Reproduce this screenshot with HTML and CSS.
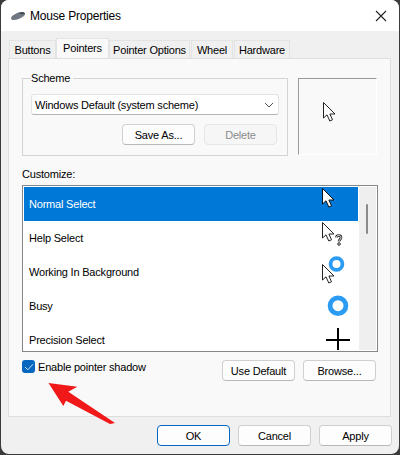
FILE: index.html
```html
<!DOCTYPE html>
<html lang="en">
<head>
  <meta charset="UTF-8" />
  <title>Mouse Properties</title>
  <link rel="stylesheet" href="styles.css">
</head>
<body>
  <div class="window">
    <div class="titlebar">
      <svg class="mouse-icon" width="16" height="10" viewBox="0 0 16 10">
        <path d="M1 7 C1 5 7 1.500 11 1 C14 .6 15.500 2 15 3.500 C14.500 5.500 8 9 4 9 C2 9 1 8.500 1 7Z" fill="#6f7880"/>
        <path d="M9 2 C11 1 14 .8 15 2.500 C13 3.500 11 3.500 9 2Z" fill="#3f464d"/>
      </svg>
      <span class="title">Mouse Properties</span>
      <svg class="close" width="12" height="12" viewBox="0 0 12 12">
        <path d="M1 1 L11 11 M11 1 L1 11" stroke="#222" stroke-width="1.100" fill="none"/>
      </svg>
    </div>

    <div class="content">
      <div class="tabs">
        <div class="tab tab-buttons">Buttons</div>
        <div class="tab active">Pointers</div>
        <div class="tab tab-options">Pointer Options</div>
        <div class="tab tab-wheel">Wheel</div>
        <div class="tab tab-hardware">Hardware</div>
      </div>

      <div class="page">
        <div class="scheme-row">
          <fieldset class="scheme">
            <legend>Scheme</legend>
            <div class="select">
              <span>Windows Default (system scheme)</span>
              <svg width="10" height="6" viewBox="0 0 10 6"><path d="M1 1 L5 5 L9 1" stroke="#555" fill="none"/></svg>
            </div>
            <div class="scheme-buttons">
              <button class="btn">Save As...</button>
              <button class="btn disabled">Delete</button>
            </div>
          </fieldset>
          <div class="preview">
            <svg width="13" height="20" viewBox="0 0 13 20"><path d="M.5 .5 V16 L4 12.800 L6.800 19 L9.500 17.800 L6.900 12 H12 Z" fill="#fff" stroke="#222"/></svg>
          </div>
        </div>

        <div class="customize-label">Customize:</div>
        <div class="list">
          <div class="rows">
            <div class="row selected">
              <span>Normal Select</span>
              <svg class="cursor-slot" width="40" height="32" viewBox="0 0 40 32"><path d="M7.500 .5 V16 L11 12.800 L13.800 19 L16.500 17.800 L13.900 12 H19 Z" fill="#fff" stroke="#111"/></svg>
            </div>
            <div class="row">
              <span>Help Select</span>
              <svg class="cursor-slot" width="40" height="32" viewBox="0 0 40 32">
                <path d="M7.500 .5 V16 L11 12.800 L13.800 19 L16.500 17.800 L13.900 12 H19 Z" fill="#fff" stroke="#222"/>
                <path d="M21.500 15.500 C21.500 12.800 26 12.800 26 15.500 C26 17.500 24 17.500 24 19.500" fill="none" stroke="#222" stroke-width="2.600"/>
                <path d="M21.500 15.500 C21.500 12.800 26 12.800 26 15.500 C26 17.500 24 17.500 24 19.500" fill="none" stroke="#fff" stroke-width="1"/>
                <circle cx="24" cy="22" r="1.300" fill="#fff" stroke="#222"/>
              </svg>
            </div>
            <div class="row">
              <span>Working In Background</span>
              <svg class="cursor-slot" width="40" height="32" viewBox="0 0 40 32">
                <path d="M7.500 8.500 V24 L11 20.800 L13.800 27 L16.500 25.800 L13.900 20 H19 Z" fill="#fff" stroke="#222"/>
                <circle cx="21.500" cy="8" r="5.900" fill="none" stroke="#2b9cf2" stroke-width="3.800"/>
              </svg>
            </div>
            <div class="row">
              <span>Busy</span>
              <svg class="cursor-slot" width="40" height="32" viewBox="0 0 40 32">
                <circle cx="23" cy="15.700" r="7.900" fill="none" stroke="#2b9cf2" stroke-width="4.800"/>
              </svg>
            </div>
            <div class="row">
              <span>Precision Select</span>
              <svg class="cursor-slot" width="40" height="32" viewBox="0 0 40 32">
                <path d="M23 4 V28 M11 16 H35" stroke="#000" stroke-width="2" fill="none"/>
              </svg>
            </div>
          </div>
          <div class="scrollbar"><div class="thumb"></div></div>
        </div>

        <div class="options">
          <label class="shadow-option">
            <span class="checkbox">
              <svg width="10" height="8" viewBox="0 0 10 8"><path d="M1 4 L3.800 6.800 L9 1.200" stroke="#cfe4f7" fill="none"/></svg>
            </span>
            Enable pointer shadow
          </label>
          <div class="option-buttons">
            <button class="btn">Use Default</button>
            <button class="btn">Browse...</button>
          </div>
        </div>
      </div>

      <div class="footer">
        <button class="btn primary">OK</button>
        <button class="btn">Cancel</button>
        <button class="btn">Apply</button>
      </div>
    </div>

    <svg class="arrow" width="70" height="44" viewBox="0 0 70 44">
      <path d="M.5 1 L29.300 4.700 L20.300 9.700 L67 41 L62 42 L18 18.700 L15.300 24 Z" fill="#f01818"/>
    </svg>
  </div>
</body>
</html>
```

FILE: styles.css
```css
* {
  box-sizing: border-box;
}

html, body {
  margin: 0;
  height: 100%;
  overflow: hidden;
}

body {
  background: #3b3b3b;
  font-family: "Liberation Sans", Arial, sans-serif;
  font-size: 11px;
  letter-spacing: -0.2px;
  color: #000;
  padding: 0 0 1px 1px;
}

.window {
  position: relative;
  width: 398px;
  height: 454px;
  background: #f0f0f0;
  border-radius: 8px;
  overflow: hidden;
}

.titlebar {
  height: 31px;
  background: #fff;
  display: flex;
  align-items: center;
  padding: 0 12px 0 9px;
}

.mouse-icon {
  margin-right: 4px;
}

.title {
  font-size: 12px;
  flex: 1;
}

.content {
  padding: 9px 7px 0;
}

.tabs {
  display: flex;
  height: 18px;
  padding-left: 1px;
}

.tab {
  padding-top: 3px;
  text-align: center;
  border: 1px solid #e3e3e3;
  border-bottom: none;
  margin-right: 1px;
  background: #f0f0f0;
  white-space: nowrap;
}

.tab-buttons {
  width: 47px;
}

.tab-options {
  width: 81px;
}

.tab-wheel {
  width: 42px;
}

.tab-hardware {
  width: 56px;
}

.tab.active {
  width: 53px;
  height: 20px;
  margin-top: -2px;
  margin-left: -1px;
  margin-right: 0;
  padding-top: 3px;
  background: #f9f9f9;
  position: relative;
  z-index: 1;
}

.page {
  height: 359px;
  margin-right: 1px;
  border: 1px solid #dedede;
  background: #f9f9f9;
  padding: 12px 13px 0;
}

.scheme-row {
  display: flex;
  gap: 10px;
}

.scheme {
  width: 266px;
  height: 85px;
  margin: 0;
  border: 1px solid #d4d4d4;
  padding: 0 8px;
}

.scheme legend {
  padding: 0 3px 0 0;
  line-height: 14px;
}

.select {
  height: 21px;
  margin-top: 9px;
  background: #fff;
  border: 1px solid #e4e4e4;
  border-bottom-color: #b5b5b5;
  border-radius: 3px;
  display: flex;
  align-items: center;
  justify-content: space-between;
  padding: 0 4px 0 3px;
}

.scheme-buttons {
  display: flex;
  justify-content: flex-end;
  gap: 9px;
  margin-top: 9px;
  padding-right: 2px;
}

.preview {
  width: 79px;
  height: 77px;
  margin-top: 7px;
  border: 1px solid #fff;
  border-top-color: #9a9a9a;
  border-left-color: #9a9a9a;
  background: #f9f9f9;
  padding: 23px 0 0 24px;
}

.preview svg {
  display: block;
}

.customize-label {
  margin-top: 11px;
  line-height: 14px;
}

.list {
  display: flex;
  height: 167px;
  margin-top: 4px;
  padding: 1px;
  border: 1px solid #82878c;
  background: #fff;
  width: 356px;
}

.rows {
  flex: 1;
  overflow: hidden;
}

.row {
  height: 34px;
  padding-left: 5px;
  display: flex;
  align-items: center;
  justify-content: space-between;
}

.row.selected {
  background: #0078d7;
  color: #fff;
}

.cursor-slot {
  margin-right: 3px;
}

.scrollbar {
  width: 17px;
  margin-left: 1px;
  background: #efefef;
  padding: 17px 0 0 7px;
}

.thumb {
  width: 2px;
  height: 30px;
  background: #8a8a8a;
  border-radius: 1px;
}

.options {
  display: flex;
  justify-content: space-between;
  padding-right: 1px;
  margin-top: 8px;
}

.shadow-option {
  display: flex;
  align-items: flex-start;
  gap: 3px;
  line-height: 14px;
}

.checkbox {
  width: 13px;
  height: 13px;
  background: #0567c0;
  border-radius: 3px;
  display: flex;
  align-items: center;
  justify-content: center;
}

.option-buttons {
  display: flex;
  gap: 8px;
}

.btn {
  width: 73px;
  height: 21px;
  padding: 0;
  font: inherit;
  letter-spacing: inherit;
  color: #000;
  background: #fdfdfd;
  border: 1px solid #d0d0d0;
  border-bottom-color: #b8b8b8;
  border-radius: 4px;
}

.btn.disabled {
  color: #8b8b8b;
  background: #f6f6f6;
  border-color: #e6e6e6;
}

.btn.primary {
  border: 1px solid #0567c0;
}

.footer {
  display: flex;
  justify-content: flex-end;
  gap: 8px;
  margin-top: 8px;
}

/* red annotation over the dialog */
.arrow {
  position: absolute;
  left: 47px;
  top: 382px;
}
```
